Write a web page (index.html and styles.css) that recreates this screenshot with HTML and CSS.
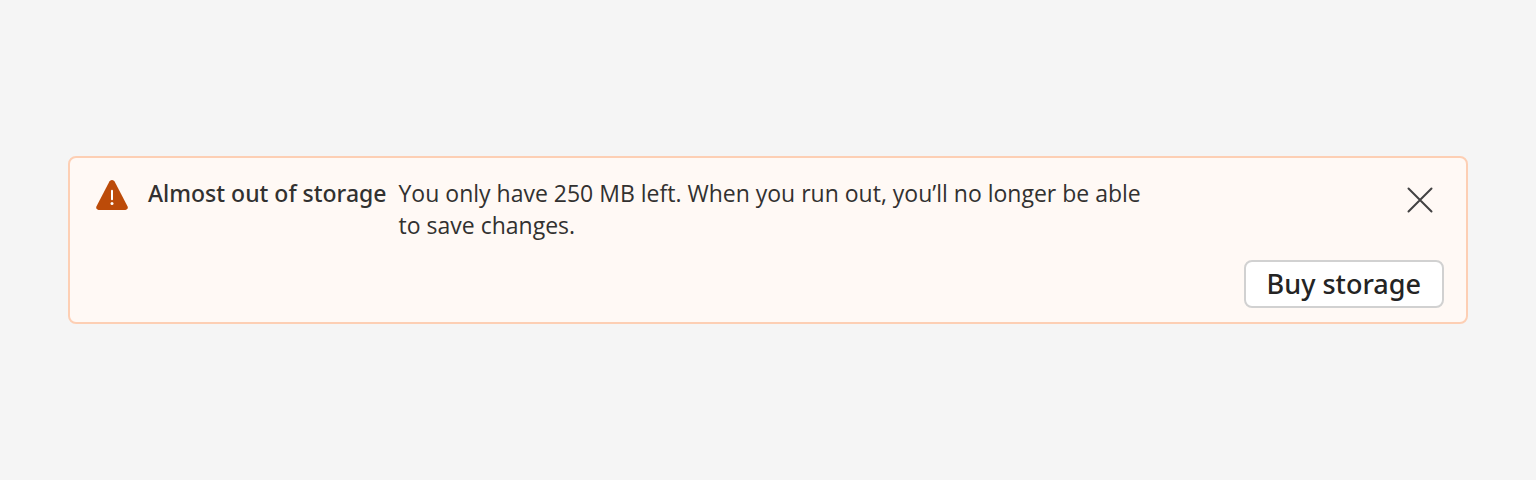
FILE: index.html
```html
<!DOCTYPE html>
<html lang="en">
<head>
    <meta charset="UTF-8">
    <meta name="viewport" content="width=device-width, initial-scale=1.0">
    <title>Storage warning</title>
    <link rel="stylesheet" href="styles.css">
</head>
<body>
    <div class="message-bar" role="status">
        <div class="message">
            <svg class="warning-icon" viewBox="0 0 32 30" aria-hidden="true">
                <path d="M13.4 1.5a3 3 0 0 1 5.2 0l13 25a2.5 2.5 0 0 1-2.2 3.5H2.6a2.5 2.5 0 0 1-2.2-3.5z" fill="#bc4b09"/>
                <path d="M16 10.8v8.4" stroke="#fff" stroke-width="2" stroke-linecap="round"/>
                <circle cx="16" cy="23.5" r="1.5" fill="#fff"/>
            </svg>
            <h1 class="title">Almost out of storage</h1>
            <p class="text">You only have 250 MB left. When you run out, you’ll no longer be able to save changes.</p>
            <button class="close-btn" type="button" aria-label="Close">
                <svg class="close-icon" viewBox="0 0 24 24" aria-hidden="true">
                    <path d="M.5.5l23 23M23.5.5l-23 23" stroke="#424242" stroke-width="2" stroke-linecap="round"/>
                </svg>
            </button>
        </div>
        <div class="actions">
            <button class="buy-btn" type="button">Buy storage</button>
        </div>
    </div>
</body>
</html>
```
FILE: styles.css
```css
* {
    box-sizing: border-box;
}

body {
    min-height: 100vh;
    margin: 0;
    padding: 0 68px;
    display: flex;
    align-items: center;
    background-color: #f5f5f5;
    color: #323130;
    font-family: 'Segoe UI', 'Noto Sans', sans-serif;
}

.message-bar {
    flex: 1;
    padding: 14px 22px;
    background-color: #fff9f5;
    border: 2px solid #fdcfb4;
    border-radius: 8px;
}

.message {
    display: flex;
    align-items: flex-start;
}

.warning-icon {
    flex: none;
    width: 32px;
    height: 30px;
    margin: 8px 20px 0 4px;
}

.title,
.text {
    margin: 5px 0 0;
    font-size: 23px;
    line-height: 32px;
}

.title {
    flex: none;
    margin-right: 12px;
    font-weight: 500;
}

.text {
    max-width: 768px;
    font-family: 'Segoe UI', 'Open Sans', sans-serif;
    font-weight: 400;
}

.close-btn {
    flex: none;
    display: flex;
    align-items: center;
    justify-content: center;
    width: 48px;
    height: 48px;
    margin: 4px 0 0 auto;
    padding: 0;
    background: none;
    border: none;
    cursor: pointer;
}

.close-icon {
    width: 24px;
    height: 24px;
    overflow: visible;
}

.actions {
    display: flex;
    justify-content: flex-end;
    margin-top: 19px;
}

.buy-btn {
    height: 48px;
    padding: 0 21px;
    background-color: white;
    border: 2px solid #d1d1d1;
    border-radius: 8px;
    color: #242424;
    font-family: inherit;
    font-size: 27px;
    font-weight: 500;
    line-height: 40px;
    cursor: pointer;
}
```
